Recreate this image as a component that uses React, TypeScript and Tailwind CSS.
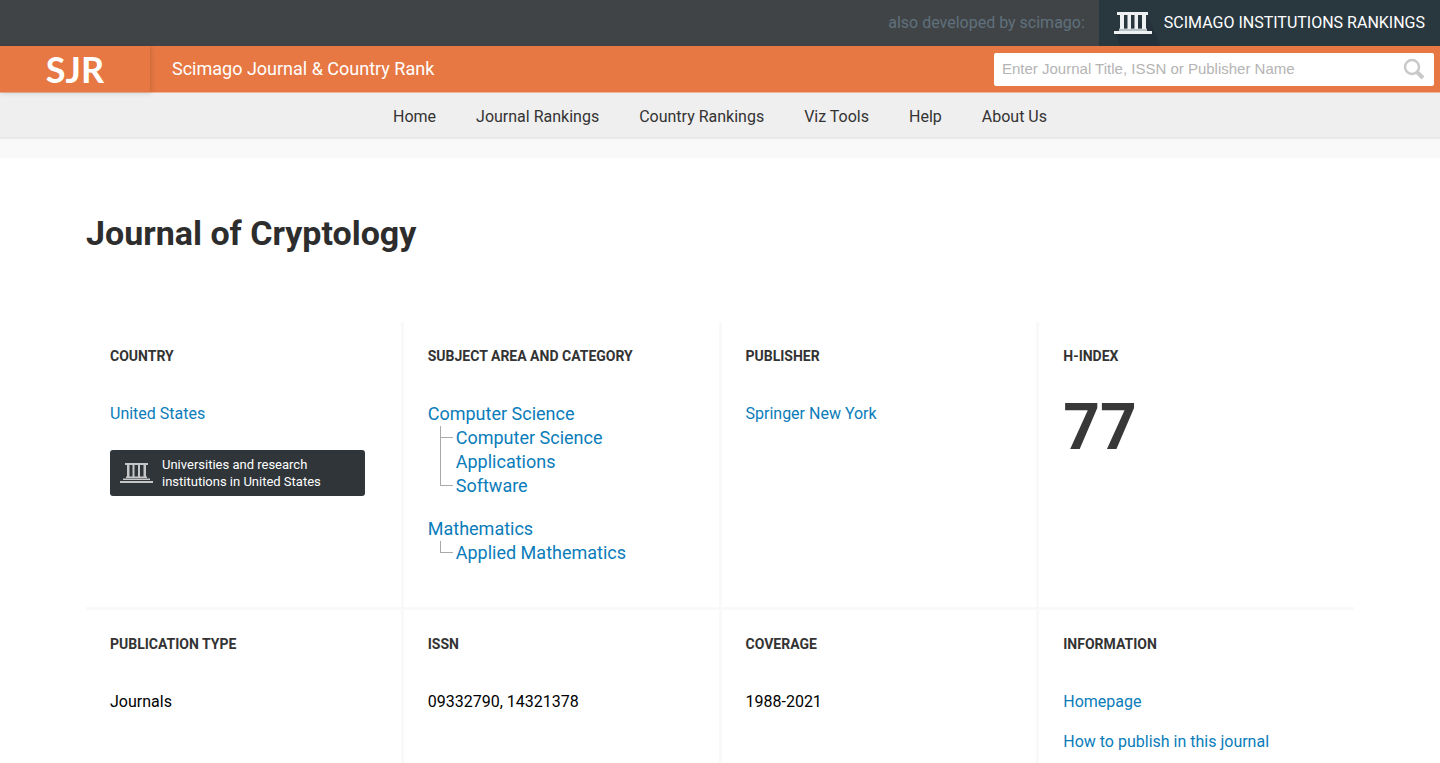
import type { ReactNode } from "react";

const navLinks = ["Home", "Journal Rankings", "Country Rankings", "Viz Tools", "Help", "About Us"];

const subjects = [
  { area: "Computer Science", categories: ["Computer Science Applications", "Software"] },
  { area: "Mathematics", categories: ["Applied Mathematics"] },
];

function HeaderTempleIcon() {
  return (
    <svg width="70" height="46" viewBox="0 0 70 46" fill="none" className="shrink-0" aria-hidden="true">
      <path d="M17 34L21 46H62L50 19Z" fill="#24313a" />
      <path d="M18 12h31v3H18zM15 31h38v3H15z" fill="#edf1f2" />
      <path d="M20 28.500h28v2.500H20z" fill="#b9c3c7" />
      <path d="M21 14h4v15h-4zM28.500 14h3.500v15h-3.500zM35.500 14h3.500v15h-3.500zM43 14h4v15h-4z" fill="#edf1f2" />
    </svg>
  );
}

function TempleIcon() {
  return (
    <svg width="34" height="22" viewBox="0 0 34 22" fill="#c4c6c8" className="shrink-0" aria-hidden="true">
      <path d="M5 1h23v2H5z" />
      <path d="M7 3h2.500v12H7zM12.500 3h2v12h-2zM18 3h2v12H18zM23.500 3h2.500v12h-2.500z" />
      <path d="M6 14.500h21v1.500H6zM3 16.500h27v1.500H3zM0 19h33v2H0z" />
    </svg>
  );
}

function SearchIcon() {
  return (
    <svg width="22" height="22" viewBox="0 0 22 22" fill="none" stroke="#c9c9c9" aria-hidden="true">
      <circle cx="9" cy="9" r="7" strokeWidth="2.500" />
      <path d="M14 14l6 6" strokeWidth="4" />
    </svg>
  );
}

function Cell({ title, children }: { title: string; children: ReactNode }) {
  return (
    <section className="bg-white px-6 pt-6">
      <h2 className="text-sm leading-5 font-bold text-[#333] uppercase">{title}</h2>
      <div className="pt-9">{children}</div>
    </section>
  );
}

function TextLink({ children }: { children: ReactNode }) {
  return (
    <a href="#" className="block text-base leading-6 text-[#0a7cba]">
      {children}
    </a>
  );
}

export default function App() {
  return (
    <div className="flex min-h-screen flex-col bg-white font-[Roboto,sans-serif] text-black">
      {/* Top bar */}
      <div className="flex h-[46px] items-center justify-end bg-[#414446]">
        <span className="pr-[14px] text-base text-[#5f717d]">also developed by scimago:</span>
        <a href="#" className="flex h-full items-center bg-[#29373f] pr-[15px] text-base text-white">
          <HeaderTempleIcon />
          <span className="-ml-[5px]">SCIMAGO INSTITUTIONS RANKINGS</span>
        </a>
      </div>

      {/* Brand and search */}
      <header className="relative flex h-[47px] items-center border-b border-[#f0b596] bg-[#e77843] text-white">
        <a
          href="#"
          className="flex h-full w-[150px] items-center justify-center font-[Lato,sans-serif] text-4xl font-bold shadow-[1px_1px_5px_rgba(0,0,0,0.15)]"
        >
          SJR
        </a>
        <span className="pl-[22px] text-lg">Scimago Journal &amp; Country Rank</span>
        <form className="mr-[6px] ml-auto flex h-[33px] w-[440px] items-center rounded-xs bg-white">
          <input
            type="text"
            aria-label="Search journals"
            placeholder="Enter Journal Title, ISSN or Publisher Name"
            className="h-full min-w-0 flex-1 px-2 pb-px font-[Liberation_Sans,Arial,sans-serif] text-[15px] text-[#333] outline-none placeholder:text-[#b4b4b4]"
          />
          <button type="button" aria-label="Search" className="pr-[9px]">
            <SearchIcon />
          </button>
        </form>
      </header>

      <nav className="flex h-[46px] items-center justify-center gap-10 border-b-2 border-[#e9e9e9] bg-[#efefef] pt-1">
        {navLinks.map(link => (
          <a key={link} href="#" className="text-base text-[#333]">
            {link}
          </a>
        ))}
      </nav>
      <div className="h-[19px] bg-[#f9f9f9]" />

      <main className="flex flex-1 flex-col px-[86px]">
        <h1 className="pt-[54px] pb-[68px] text-[34px] leading-[42px] font-bold text-[#2d2d2d]">
          Journal of Cryptology
        </h1>

        <div className="grid flex-1 grid-cols-4 grid-rows-[auto_1fr] gap-[3px] bg-[#f9f9f9]">
          <Cell title="Country">
            <TextLink>United States</TextLink>
            <a
              href="#"
              className="mt-6 flex w-[255px] items-center gap-2 rounded-[3px] bg-[#2f3539] px-[10px] py-[6px] text-[13px] leading-[17px] text-white"
            >
              <TempleIcon />
              <span>
                Universities and research
                <br />
                institutions in United States
              </span>
            </a>
          </Cell>

          <Cell title="Subject Area and Category">
            <ul className="flex flex-col gap-[19px] pb-[42px] text-lg leading-6 text-[#0a7cba]">
              {subjects.map(s => (
                <li key={s.area}>
                  <a href="#">{s.area}</a>
                  <ul className="ml-3">
                    {s.categories.map((c, i) => (
                      <li key={c} className="relative w-[200px] pl-4">
                        {/* tree branch */}
                        <span className="absolute top-0 left-0 h-3 w-[13px] border-b border-l border-[#aaa]" />
                        {i < s.categories.length - 1 && (
                          <span className="absolute top-0 bottom-0 left-0 border-l border-[#aaa]" />
                        )}
                        <a href="#">{c}</a>
                      </li>
                    ))}
                  </ul>
                </li>
              ))}
            </ul>
          </Cell>

          <Cell title="Publisher">
            <TextLink>Springer New York</TextLink>
          </Cell>

          <Cell title="H-Index">
            <p className="text-[64px] leading-[52px] font-bold text-[#383838]">77</p>
          </Cell>

          <Cell title="Publication type">
            <p>Journals</p>
          </Cell>

          <Cell title="ISSN">
            <p>09332790, 14321378</p>
          </Cell>

          <Cell title="Coverage">
            <p>1988-2021</p>
          </Cell>

          <Cell title="Information">
            <div className="flex flex-col gap-4">
              <TextLink>Homepage</TextLink>
              <TextLink>How to publish in this journal</TextLink>
            </div>
          </Cell>
        </div>
      </main>
    </div>
  );
}
